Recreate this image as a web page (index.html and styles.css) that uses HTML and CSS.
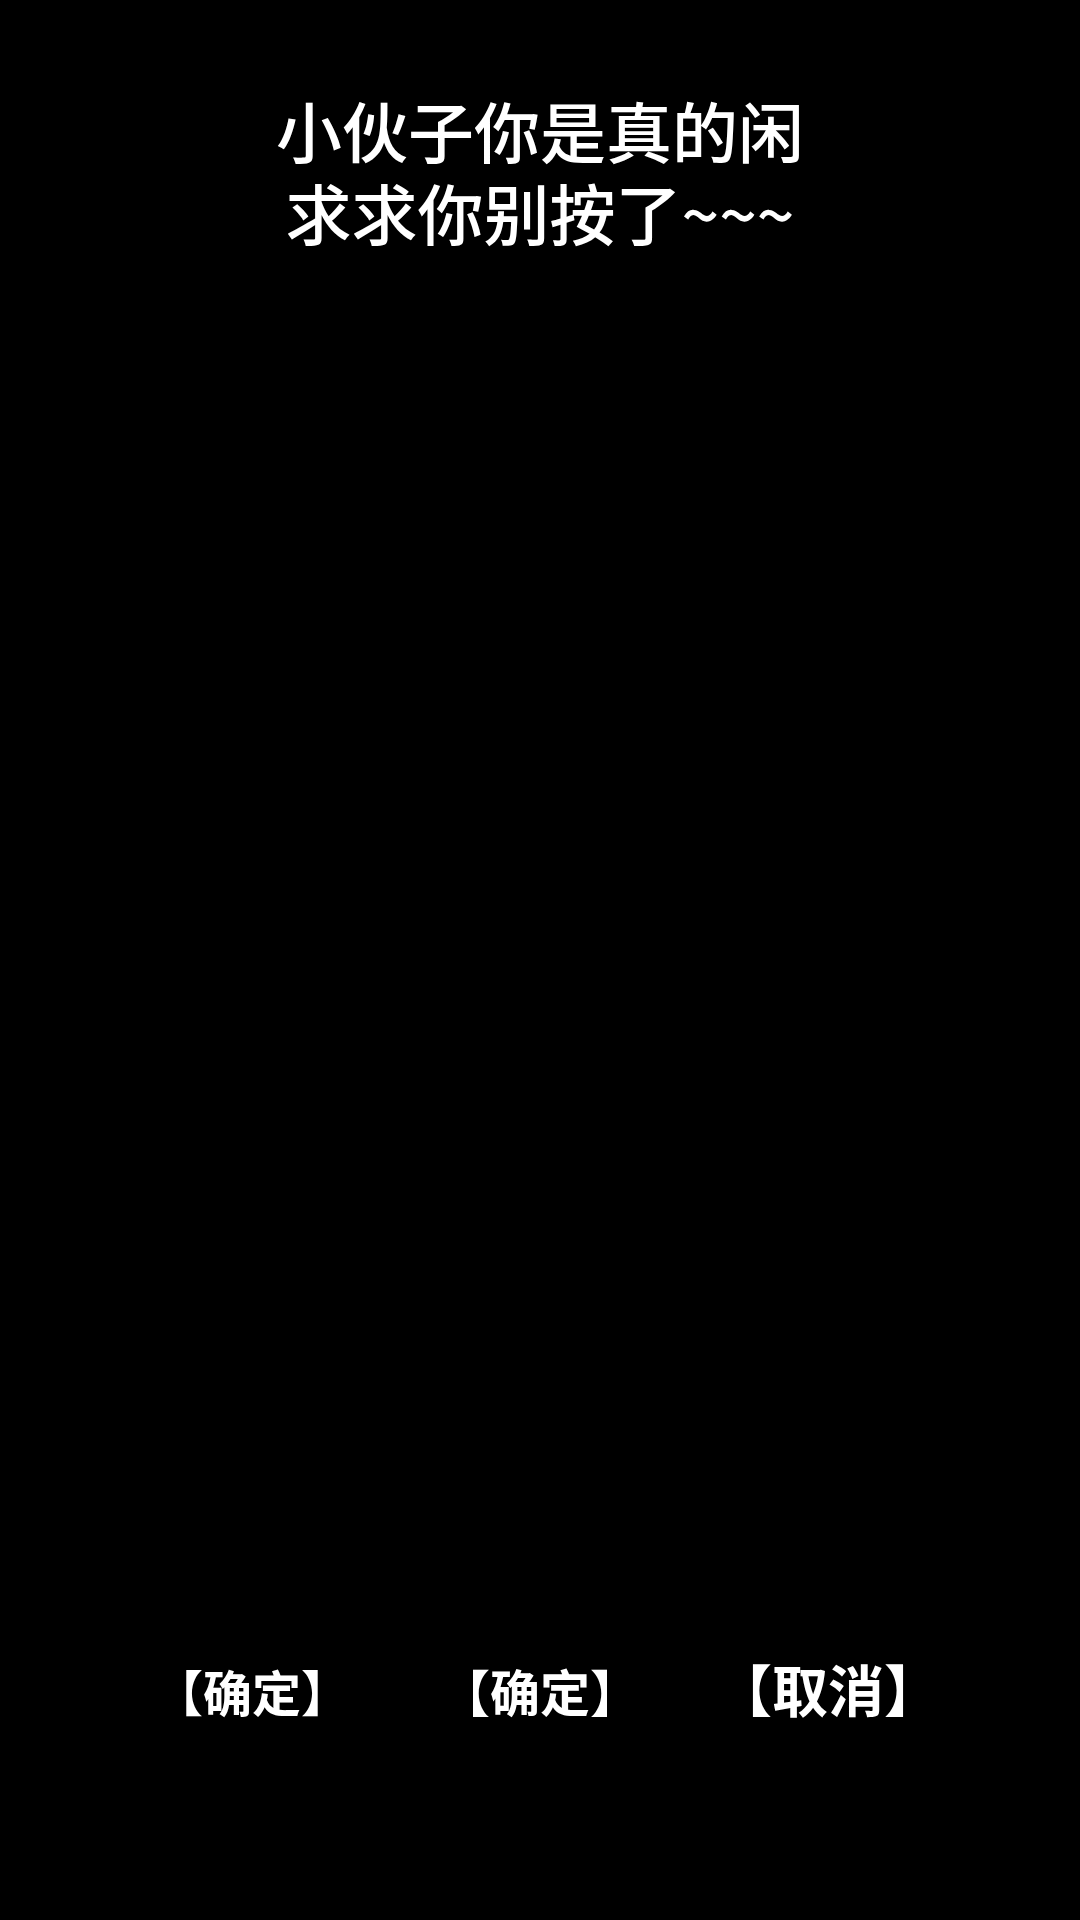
FILE: index.html
```html
<!DOCTYPE html>
<html lang="zh-CN">
<head>
<meta charset="utf-8">
<link rel="stylesheet" href="styles.css">
</head>
<body>
<main class="screen">
  <h1 class="message">
    <span class="line">小伙子你是真的闲</span>
    <span class="line">求求你别按了~~~</span>
  </h1>
  <div class="actions">
    <span class="btn">【确定】</span>
    <span class="btn btn-mid">【确定】</span>
    <span class="btn btn-big">【取消】</span>
  </div>
</main>
</body>
</html>
```

FILE: styles.css
```css
html, body {
  margin: 0;
  padding: 0;
  background: #000;
}
.screen {
  width: 1080px;
  height: 1920px;
  background: #000;
  color: #fff;
  font-family: "Noto Sans CJK SC", "Noto Sans", sans-serif;
  display: flex;
  flex-direction: column;
}
.message {
  margin: 0;
  padding-top: 88px;
  font-size: 66px;
  font-weight: 500;
  line-height: 82px;
  text-align: center;
  display: flex;
  flex-direction: column;
  align-items: center;
}
.line {
  display: block;
  white-space: nowrap;
}
.actions {
  margin-top: 1411px;
  display: grid;
  grid-template-columns: repeat(3, 288px);
  justify-content: center;
  align-items: baseline;
}
.btn {
  text-align: center;
  font-size: 49px;
  font-weight: 700;
  line-height: 49px;
  white-space: nowrap;
}
.btn-mid {
  font-size: 50px;
}
.btn-big {
  font-size: 56px;
}
```
